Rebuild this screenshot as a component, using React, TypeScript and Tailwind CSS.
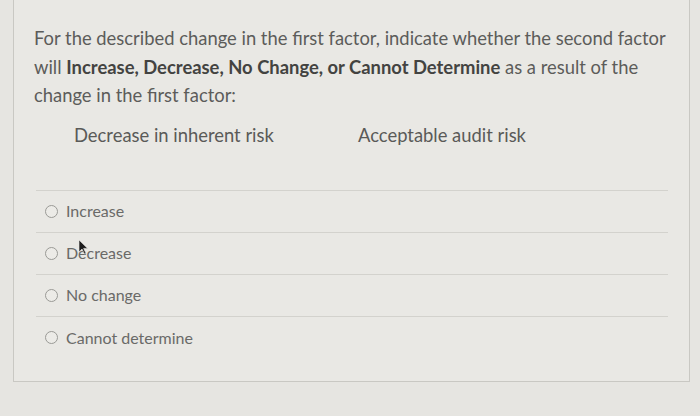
import React from 'react';

const options = ['Increase', 'Decrease', 'No change', 'Cannot determine'];

const Radio: React.FC = () => (
  <span className="inline-block w-[13px] h-[13px] rounded-full border border-[#9a9a96] bg-[#ecebe7]" />
);

const App: React.FC = () => {
  return (
    <div
      className="w-[700px] h-[416px] bg-[#e6e5e1] overflow-hidden"
      style={{ fontFamily: 'Lato, "Open Sans", sans-serif' }}
    >
      <div className="ml-[13px] w-[677px] h-[382px] border-l border-r border-b border-[#c9c8c3] bg-[#e9e8e4] pt-[24px] pl-[20px] pr-[10px]">
        <p className="w-[640px] text-[18.4px] leading-[28.5px] text-[#5c5c5a]">
          For the described change in the first factor, indicate whether the second factor will{' '}
          <span className="font-bold text-[#434341]">Increase, Decrease, No Change, or Cannot Determine</span> as a
          result of the change in the first factor:
        </p>

        <div className="flex mt-[13px] text-[18.4px] text-[#5a5a58] leading-[24px]">
          <div className="w-[324px] pl-[40px]">Decrease in inherent risk</div>
          <div>Acceptable audit risk</div>
        </div>

        <div className="mt-[43px] ml-[2px] w-[632px] border-t border-[#d3d2cd]">
          {options.map((opt, i) => (
            <div
              key={opt}
              className={`relative h-[42px] flex items-center gap-[8px] pl-[9px] text-[16px] text-[#6a6a68] ${
                i < options.length - 1 ? 'border-b border-[#d3d2cd]' : ''
              }`}
            >
              <Radio />
              <span>{opt}</span>
              {i === 1 && (
                <svg
                  className="absolute left-[42px] top-[6px]"
                  width="11"
                  height="16"
                  viewBox="0 0 11 16"
                >
                  <path d="M1 1 L1 13 L4 10 L6.5 15 L8 14.3 L5.6 9.4 L9.6 9.4 Z" fill="#1d1d1d" stroke="#e9e8e4" strokeWidth="0.6" />
                </svg>
              )}
            </div>
          ))}
        </div>
      </div>
    </div>
  );
};

export default App;
